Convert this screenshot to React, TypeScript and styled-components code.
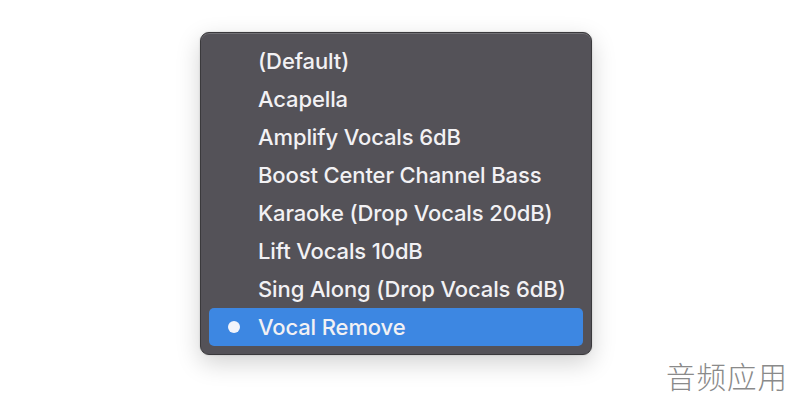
import React from 'react';
import styled, { createGlobalStyle } from 'styled-components';

const GlobalStyle = createGlobalStyle`
  html, body {
    margin: 0;
    padding: 0;
    background: #ffffff;
  }
  body {
    width: 792px;
    height: 400px;
    overflow: hidden;
    font-family: "Inter", "Liberation Sans", sans-serif;
  }
`;

const Page = styled.div`
  width: 792px;
  height: 400px;
  position: relative;
  padding-top: 32px;
  padding-left: 200px;
  box-sizing: border-box;
`;

const Menu = styled.div`
  width: 392px;
  box-sizing: border-box;
  padding: 9px 8px 8px;
  background: #545258;
  border: 1px solid #3a393c;
  border-radius: 9px;
  box-shadow: inset 0 1px 0 rgba(255, 255, 255, 0.18), 0 8px 24px rgba(0, 0, 0, 0.18), 0 0 2px rgba(0, 0, 0, 0.2);
  display: flex;
  flex-direction: column;
`;

const Item = styled.div<{ $active?: boolean }>`
  height: 38px;
  display: flex;
  align-items: center;
  border-radius: 5px;
  background: ${(p) => (p.$active ? '#3d87e2' : 'transparent')};
  color: #f2f1f4;
  font-size: 22px;
  font-weight: 500;
  letter-spacing: -0.12px;
`;

const Check = styled.span`
  width: 49px;
  display: flex;
  justify-content: center;
`;

const Dot = styled.span`
  width: 12px;
  height: 12px;
  border-radius: 50%;
  background: #f2f4fb;
`;

const Watermark = styled.div`
  position: absolute;
  right: 4px;
  bottom: 4px;
  font-family: "Noto Sans CJK SC", sans-serif;
  font-size: 29.5px;
  font-weight: 300;
  color: #8a8a8a;
  letter-spacing: 1px;
`;

const items = [
  '(Default)',
  'Acapella',
  'Amplify Vocals 6dB',
  'Boost Center Channel Bass',
  'Karaoke (Drop Vocals 20dB)',
  'Lift Vocals 10dB',
  'Sing Along (Drop Vocals 6dB)',
  'Vocal Remove',
];

export default function App() {
  const selected = 'Vocal Remove';
  return (
    <>
      <GlobalStyle />
      <Page>
        <Menu>
          {items.map((label) => (
            <Item key={label} $active={label === selected}>
              <Check>{label === selected && <Dot />}</Check>
              {label}
            </Item>
          ))}
        </Menu>
        <Watermark>音频应用</Watermark>
      </Page>
    </>
  );
}
